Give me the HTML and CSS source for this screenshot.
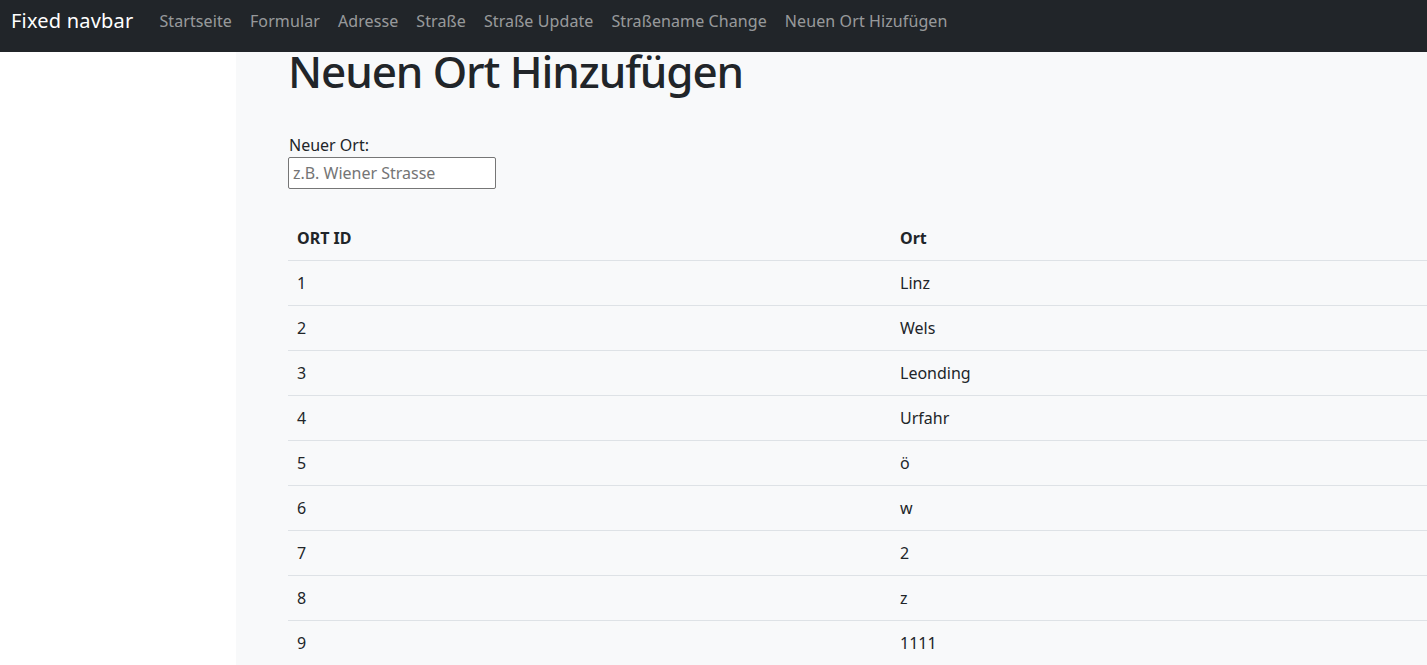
FILE: index.html
```html
<!DOCTYPE html>
<html lang="de">
<head>
<meta charset="utf-8">
<title>Neuen Ort Hinzufügen</title>
<link rel="stylesheet" href="styles.css">
</head>
<body>
<nav class="navbar">
  <a class="brand" href="#">Fixed navbar</a>
  <ul class="nav-links">
    <li><a href="#">Startseite</a></li>
    <li><a href="#">Formular</a></li>
    <li><a href="#">Adresse</a></li>
    <li><a href="#">Straße</a></li>
    <li><a href="#">Straße Update</a></li>
    <li><a href="#">Straßename Change</a></li>
    <li><a href="#">Neuen Ort Hizufügen</a></li>
  </ul>
</nav>
<div class="layout">
  <aside class="sidebar"></aside>
  <main class="main">
    <h1 class="title">Neuen Ort Hinzufügen</h1>
    <form class="form">
      <label class="label" for="ort">Neuer Ort:</label>
      <input class="input" id="ort" type="text" placeholder="z.B. Wiener Strasse">
    </form>
    <table class="table">
      <thead>
        <tr><th class="col-id">ORT ID</th><th class="col-ort">Ort</th></tr>
      </thead>
      <tbody>
        <tr><td>1</td><td>Linz</td></tr>
        <tr><td>2</td><td>Wels</td></tr>
        <tr><td>3</td><td>Leonding</td></tr>
        <tr><td>4</td><td>Urfahr</td></tr>
        <tr><td>5</td><td>ö</td></tr>
        <tr><td>6</td><td>w</td></tr>
        <tr><td>7</td><td>2</td></tr>
        <tr><td>8</td><td>z</td></tr>
        <tr><td>9</td><td>1111</td></tr>
      </tbody>
    </table>
  </main>
</div>
</body>
</html>
```
FILE: styles.css
```css
* { box-sizing: border-box; }
html, body { margin: 0; padding: 0; }
body {
  font-family: "Noto Sans", "Open Sans", sans-serif;
  font-size: 16px;
  line-height: 1.5;
  color: #212529;
  background: #fff;
  overflow: hidden;
}
.navbar {
  height: 52px;
  background: #212529;
  display: flex;
  align-items: center;
  padding: 0 12px 10px 11px;
}
.brand {
  color: #fff;
  font-size: 20px;
  text-decoration: none;
  margin-right: 17px;
  line-height: 30px;
  letter-spacing: 0.2px;
}
.nav-links {
  list-style: none;
  display: flex;
  margin: 0;
  padding: 0;
}
.nav-links a {
  display: block;
  padding: 0 9px;
  color: rgba(255, 255, 255, 0.55);
  text-decoration: none;
  letter-spacing: 0.1px;
}
.layout {
  display: flex;
  min-height: 613px;
}
.sidebar {
  width: 236px;
  flex: 0 0 236px;
  background: #fff;
}
.main {
  flex: 1;
  background: #f8f9fa;
  padding: 0 0 0 52px;
}
.title {
  margin: 0;
  font-size: 44px;
  font-weight: 500;
  line-height: 38px;
  letter-spacing: -1.1px;
}
.form {
  margin-top: 43px;
}
.label {
  display: block;
  line-height: 24px;
  padding-left: 1px;
}
.input {
  display: block;
  width: 208px;
  height: 32px;
  border: 1px solid #767676;
  border-radius: 2px;
  padding: 1px 4px;
  font-family: inherit;
  font-size: 16px;
  color: #212529;
  background: #fff;
}
.input::placeholder { color: #757575; }
.table {
  margin-top: 27px;
  width: 100%;
  border-collapse: collapse;
}
.table th, .table td {
  text-align: left;
  padding: 10px 8px 10px 9px;
  line-height: 24px;
  border-bottom: 1px solid #dee2e6;
}
.table th { font-weight: 700; }
.table td + td, .table .col-ort { padding-left: 8px; }
.col-id { width: 604px; }
```
